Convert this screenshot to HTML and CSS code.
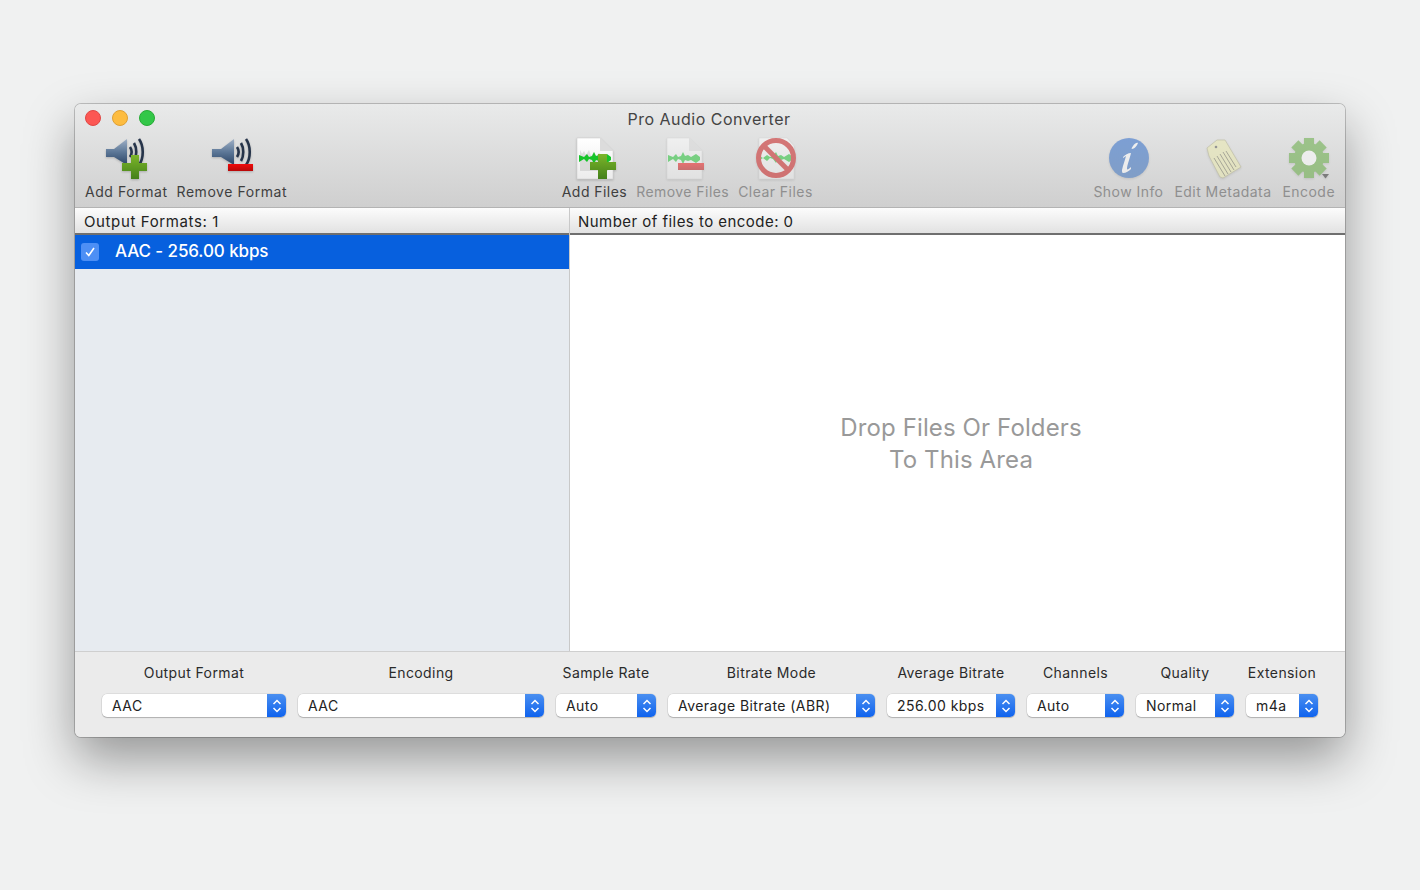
FILE: index.html
```html
<!DOCTYPE html>
<html lang="en">
<head>
  <meta charset="UTF-8" />
  <title>Pro Audio Converter</title>
  <link rel="stylesheet" href="styles.css">
</head>
<body>

<svg class="defs" width="0" height="0">
  <defs>
    <linearGradient id="cone" x1="0" y1="0" x2="0" y2="1">
      <stop offset="0" stop-color="#9fb0c6"/>
      <stop offset="0.5" stop-color="#5c7797"/>
      <stop offset="1" stop-color="#2c4567"/>
    </linearGradient>
    <linearGradient id="plus" x1="0" y1="0" x2="0" y2="1">
      <stop offset="0" stop-color="#7cb62a"/>
      <stop offset="1" stop-color="#44801a"/>
    </linearGradient>
    <linearGradient id="minus" x1="0" y1="0" x2="0" y2="1">
      <stop offset="0" stop-color="#f00c0c"/>
      <stop offset="1" stop-color="#b80808"/>
    </linearGradient>
    <linearGradient id="paper" x1="0" y1="0" x2="0" y2="1">
      <stop offset="0" stop-color="#ffffff"/>
      <stop offset="1" stop-color="#ececec"/>
    </linearGradient>
    <linearGradient id="info" x1="0" y1="0" x2="0" y2="1">
      <stop offset="0" stop-color="#1b5fc8"/>
      <stop offset="1" stop-color="#2c66b8"/>
    </linearGradient>
  </defs>
</svg>

<div class="window">
  <div class="toolbar">
    <div class="lights">
      <span class="light red"></span>
      <span class="light yellow"></span>
      <span class="light green"></span>
    </div>
    <div class="title">Pro Audio Converter</div>
    <div class="tools">
      <div class="group formats">
        <div class="tool">
          <svg width="46" height="44" viewBox="0 0 46 44">
            <path d="M3 12h8l13-10v26L11 20H3z" fill="url(#cone)"/>
            <path d="M27 10c2 3 2 7 0 10M31 6c3 5 3 13 0 18M36 2c5 7 5 19 0 26" fill="none" stroke="#26344a" stroke-width="2.6"/>
            <path d="M28 18h8v8h8v8h-8v8h-8v-8h-9v-8h9z" fill="url(#plus)"/>
          </svg>
          <span>Add Format</span>
        </div>
        <div class="tool">
          <svg width="46" height="44" viewBox="0 0 46 44">
            <path d="M3 12h9l13-10v26L12 20H3z" fill="url(#cone)"/>
            <path d="M28 10c2 3 2 7 0 10M32 6c3 5 3 13 0 18M37 2c5 7 5 19 0 26" fill="none" stroke="#26344a" stroke-width="2.6"/>
            <rect x="19" y="27" width="25" height="7" fill="url(#minus)"/>
          </svg>
          <span>Remove Format</span>
        </div>
      </div>
      <div class="spacer first"></div>
      <div class="group files">
        <div class="tool">
          <svg width="46" height="44" viewBox="0 0 46 44">
            <path d="M6 1h23l13 13v28H6z" fill="url(#paper)" stroke="#d0d0d0" stroke-width="0.6"/>
            <path d="M29 1v13h13z" fill="#dcdcdc"/>
            <path d="M9 13l2 4 2-3 2 4 3-5 2 6 3-4 2 4 3-3 3 3 3-2 3 3v14H9z" fill="#bdbdbd" opacity="0.45"/>
            <path d="M8 18l5 2 3-3 2 3 3-1 2-4 2 4 3-1 3 2 5-3 4 3v3l-4 3-5-3-3 1-3-1-2 4-2-4-3-1-2 3-3-3-5 3z" fill="#17c42a"/>
            <path d="M27 17h9v8h9v8h-9v9h-9v-9h-8v-8h8z" fill="url(#plus)"/>
          </svg>
          <span>Add Files</span>
        </div>
        <div class="tool off">
          <svg width="46" height="44" viewBox="0 0 46 44">
            <path d="M7 1h22l13 13v28H7z" fill="url(#paper)" stroke="#d0d0d0" stroke-width="0.6"/>
            <path d="M29 1v13h13z" fill="#dcdcdc"/>
            <path d="M8 18l5 2 3-3 2 3 3-1 2-4 2 4 3-1 3 2 5-3 4 3v3l-4 3-5-3-3 1-3-1-2 4-2-4-3-1-2 3-3-3-5 3z" fill="#17c42a"/>
            <rect x="18" y="26" width="26" height="7" fill="url(#minus)"/>
          </svg>
          <span>Remove Files</span>
        </div>
        <div class="tool off">
          <svg width="46" height="44" viewBox="0 0 46 44">
            <path d="M7 1h28l7 8v33H7z" fill="url(#paper)" stroke="#d0d0d0" stroke-width="0.6"/>
            <path d="M6 18l5 3 4-3 3 2 3-1 3-4 2 4 3-1 3 2 5-3 4 3v2l-4 3-5-3-3 1-3-1-2 4-3-4-3-1-3 3-4-3-5 3z" fill="#17c42a"/>
            <circle cx="24" cy="21" r="17.500" fill="none" stroke="#c80f0f" stroke-width="5"/>
            <path d="M12 9l24 24" stroke="#c80f0f" stroke-width="5"/>
          </svg>
          <span>Clear Files</span>
        </div>
      </div>
      <div class="spacer second"></div>
      <div class="group wide">
        <div class="tool off info">
          <svg width="46" height="44" viewBox="0 0 46 44">
            <circle cx="24" cy="21" r="20" fill="url(#info)"/>
            <path d="M33 6c-1 3-4 6-6 6-1 0 0-2 1-3 1-2 4-4 5-3zM18 20c2-2 5-4 8-4-1 5-4 12-4 16 0 1 2 0 4-2l0 2c-2 2-5 4-8 4-1 0-1-2-1-3 1-5 3-10 4-14l-3 2z" fill="#fff"/>
          </svg>
          <span>Show Info</span>
        </div>
        <div class="tool off">
          <svg width="46" height="44" viewBox="0 0 46 44">
            <path d="M7 11l10-8h8l16 27-18 11-3-1-11-21z" fill="#ecebaa" stroke="#a9a77a" stroke-width="0.8"/>
            <circle cx="16" cy="10" r="1.300" fill="#4d4d4d"/>
            <path d="M14 21l11 18M17 19l11 18M20 17l11 18M23 15l11 18M26 14l10 16" stroke="#55543f" stroke-width="0.8"/>
          </svg>
          <span>Edit Metadata</span>
        </div>
        <div class="tool off">
          <svg width="46" height="44" viewBox="0 0 46 44">
            <g class="gear" fill="#5aa635">
              <circle cx="24" cy="21" r="15"/>
              <rect x="19" y="1" width="10" height="10"/>
              <rect x="19" y="1" width="10" height="10" transform="rotate(45 24 21)"/>
              <rect x="19" y="1" width="10" height="10" transform="rotate(90 24 21)"/>
              <rect x="19" y="1" width="10" height="10" transform="rotate(135 24 21)"/>
              <rect x="19" y="1" width="10" height="10" transform="rotate(180 24 21)"/>
              <rect x="19" y="1" width="10" height="10" transform="rotate(225 24 21)"/>
              <rect x="19" y="1" width="10" height="10" transform="rotate(270 24 21)"/>
              <rect x="19" y="1" width="10" height="10" transform="rotate(315 24 21)"/>
              <circle cx="24" cy="21" r="7.500" fill="#fff"/>
            </g>
            <path d="M36 37h7l-3.500 4.500z" fill="#222"/>
          </svg>
          <span>Encode</span>
        </div>
      </div>
    </div>
  </div>

  <div class="columns">
    <div class="left">
      <div class="col-head">Output Formats: 1</div>
      <div class="format-row">
        <span class="check">
          <svg width="12" height="12" viewBox="0 0 12 12"><path d="M2 6.500l2.800 3L10 2" fill="none" stroke="#fff" stroke-width="1.600"/></svg>
        </span>
        <span class="format-name">AAC - 256.00 kbps</span>
      </div>
    </div>
    <div class="right">
      <div class="col-head files-head">Number of files to encode: 0</div>
      <div class="drop">Drop Files Or Folders<br>To This Area</div>
    </div>
  </div>

  <div class="options">
    <div class="field"><label>Output Format</label><div class="select">AAC<span class="stepper"><svg width="10" height="14" viewBox="0 0 10 14"><path d="M1.500 5L5 1.500 8.500 5M1.500 9L5 12.500 8.500 9" fill="none" stroke="#fff" stroke-width="1.500"/></svg></span></div></div>
    <div class="field"><label>Encoding</label><div class="select">AAC<span class="stepper"><svg width="10" height="14" viewBox="0 0 10 14"><path d="M1.500 5L5 1.500 8.500 5M1.500 9L5 12.500 8.500 9" fill="none" stroke="#fff" stroke-width="1.500"/></svg></span></div></div>
    <div class="field"><label>Sample Rate</label><div class="select">Auto<span class="stepper"><svg width="10" height="14" viewBox="0 0 10 14"><path d="M1.500 5L5 1.500 8.500 5M1.500 9L5 12.500 8.500 9" fill="none" stroke="#fff" stroke-width="1.500"/></svg></span></div></div>
    <div class="field"><label>Bitrate Mode</label><div class="select">Average Bitrate (ABR)<span class="stepper"><svg width="10" height="14" viewBox="0 0 10 14"><path d="M1.500 5L5 1.500 8.500 5M1.500 9L5 12.500 8.500 9" fill="none" stroke="#fff" stroke-width="1.500"/></svg></span></div></div>
    <div class="field"><label>Average Bitrate</label><div class="select">256.00 kbps<span class="stepper"><svg width="10" height="14" viewBox="0 0 10 14"><path d="M1.500 5L5 1.500 8.500 5M1.500 9L5 12.500 8.500 9" fill="none" stroke="#fff" stroke-width="1.500"/></svg></span></div></div>
    <div class="field"><label>Channels</label><div class="select">Auto<span class="stepper"><svg width="10" height="14" viewBox="0 0 10 14"><path d="M1.500 5L5 1.500 8.500 5M1.500 9L5 12.500 8.500 9" fill="none" stroke="#fff" stroke-width="1.500"/></svg></span></div></div>
    <div class="field"><label>Quality</label><div class="select">Normal<span class="stepper"><svg width="10" height="14" viewBox="0 0 10 14"><path d="M1.500 5L5 1.500 8.500 5M1.500 9L5 12.500 8.500 9" fill="none" stroke="#fff" stroke-width="1.500"/></svg></span></div></div>
    <div class="field"><label>Extension</label><div class="select">m4a<span class="stepper"><svg width="10" height="14" viewBox="0 0 10 14"><path d="M1.500 5L5 1.500 8.500 5M1.500 9L5 12.500 8.500 9" fill="none" stroke="#fff" stroke-width="1.500"/></svg></span></div></div>
  </div>
</div>

</body>
</html>
```

FILE: styles.css
```css
* {
  box-sizing: border-box;
}
body {
  margin: 0;
  height: 890px;
  overflow: hidden;
  padding: 104px 75px 0;
  background-color: #f0f1f1;
  font-family: Inter, "Liberation Sans", sans-serif;
  font-size: 14px;
  color: #222;
}
.defs {
  display: block;
}
.window {
  height: 633px;
  display: flex;
  flex-direction: column;
  border-radius: 6px;
  overflow: hidden;
  box-shadow: 0 0 0 1px rgba(0,0,0,0.2), 0 22px 50px rgba(0,0,0,0.38);
}
.toolbar {
  position: relative;
  height: 104px;
  flex: none;
  padding-top: 33px;
  background: linear-gradient(#e9eaea, #cfcfcf);
  border-bottom: 1px solid #b3b3b3;
}
.lights {
  position: absolute;
  top: 6px;
  left: 10px;
  display: flex;
  gap: 11px;
}
.light {
  width: 16px;
  height: 16px;
  border-radius: 50%;
}
.red { background-color: #fc5753; border: 1px solid #df4744; }
.yellow { background-color: #fdbc40; border: 1px solid #de9f34; }
.green { background-color: #33c748; border: 1px solid #27aa35; }
.title {
  position: absolute;
  top: 5px;
  left: 0;
  width: 1268px;
  text-align: center;
  font-size: 16px;
  line-height: 20px;
  letter-spacing: 0.5px;
  color: #444;
}
.tools {
  display: flex;
  padding: 0 10px;
}
.group {
  display: flex;
  gap: 10px;
}
.group.formats {
  gap: 9px;
}
.group.files {
  gap: 9px;
}
.group.wide {
  gap: 11px;
}
.spacer.first {
  flex: 275;
}
.spacer.second {
  flex: 281;
}
.tool {
  display: flex;
  flex-direction: column;
  align-items: center;
  color: #3f3f3f;
  line-height: 18px;
  letter-spacing: 0.45px;
  white-space: nowrap;
}
.group.formats .tool {
  letter-spacing: 0.55px;
}
.tool svg {
  height: 44px;
  margin-bottom: 2px;
  filter: drop-shadow(0 1px 1px rgba(0,0,0,0.2));
}
.tool.off {
  color: #8f8f8f;
}
.tool.off svg {
  opacity: 0.5;
}
.gear {
  transform: translateX(-1px);
}
.columns {
  flex: 1;
  display: flex;
  min-height: 0;
}
.left {
  width: 495px;
  flex: none;
  background-color: #e7ebf0;
  border-right: 1px solid #c9c9c9;
}
.right {
  flex: 1;
  background-color: #fff;
  display: flex;
  flex-direction: column;
}
.col-head {
  height: 27px;
  flex: none;
  padding-left: 9px;
  line-height: 27px;
  font-size: 15px;
  letter-spacing: 0.62px;
  color: #222;
  background: linear-gradient(#fcfcfc, #e2e2e2);
  border-bottom: 2px solid #6f6f6f;
}
.col-head.files-head {
  padding-left: 8px;
  letter-spacing: 0.46px;
}
.format-row {
  height: 34px;
  display: flex;
  align-items: center;
  padding-left: 6px;
  gap: 16px;
  background-color: #0760de;
  color: #fff;
  font-size: 17px;
  font-weight: 500;
}
.format-name {
  margin-bottom: 2px;
  letter-spacing: -0.1px;
}
.check {
  width: 18px;
  height: 18px;
  display: flex;
  align-items: center;
  justify-content: center;
  border-radius: 3px;
  background-color: #4d8ff5;
}
.drop {
  flex: 1;
  display: flex;
  align-items: center;
  justify-content: center;
  padding: 2px 0 0 7px;
  text-align: center;
  font-size: 24px;
  letter-spacing: 0.12px;
  line-height: 32px;
  color: #999;
}
.options {
  height: 86px;
  flex: none;
  display: grid;
  grid-template-columns: 184px 246px 100px 207px 128px 97px 98px 72px;
  column-gap: 12px;
  padding: 11px 0 0 27px;
  background-color: #ebebeb;
  border-top: 1px solid #cfcfcf;
}
.field {
  display: flex;
  flex-direction: column;
  align-items: center;
}
.field label {
  line-height: 20px;
  margin-bottom: 11px;
  letter-spacing: 0.4px;
  color: #2a2a2a;
}
.select {
  position: relative;
  width: 100%;
  height: 23px;
  padding-left: 10px;
  line-height: 23px;
  letter-spacing: 0.45px;
  background-color: #fff;
  border-radius: 5px;
  box-shadow: 0 0 0 0.5px rgba(0,0,0,0.12), 0 1px 1px rgba(0,0,0,0.2);
  color: #222;
}
.stepper {
  position: absolute;
  top: 0;
  right: 0;
  width: 19px;
  height: 23px;
  display: flex;
  align-items: center;
  justify-content: center;
  border-radius: 0 5px 5px 0;
  background: linear-gradient(#4a8ff0, #0f63ee);
}
```
